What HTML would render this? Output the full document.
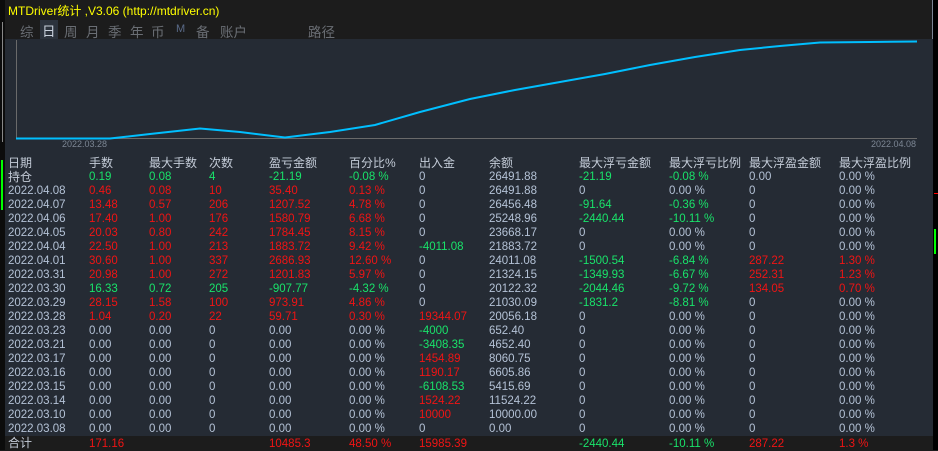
<!DOCTYPE html>
<html><head><meta charset="utf-8"><style>
*{margin:0;padding:0;box-sizing:border-box}
body{width:938px;height:450px;background:#1c1c1c;position:relative;overflow:hidden;font-family:"Liberation Sans","Noto Sans CJK SC",sans-serif;}
.abs{position:absolute}
#title{left:8px;top:2px;color:#ffff00;font-size:12px;white-space:nowrap}
#tabs{left:0;top:20px;height:19px;width:933px}
#tabs span{position:absolute;top:1px;font-size:13.5px;color:#6a6e74}
#panel{left:5px;top:39px;width:928px;height:397px;background:#252b34}
#foot{left:5px;top:436px;width:928px;height:14px;background:#1c1c1c}
.r{position:absolute;left:0;width:933px;height:14px;font-size:11.5px;line-height:14px;color:#b4c2d6;white-space:nowrap}
.r span{position:absolute;top:0}
.h{font-size:12px;color:#c4ccd8}
.c0{left:8px}.c1{left:89px}.c2{left:149px}.c3{left:209px}.c4{left:269px}.c5{left:349px}.c6{left:419px}.c7{left:489px}.c8{left:579px}.c9{left:669px}.c10{left:749px}.c11{left:839px}
.R{color:#f01414}.G{color:#19e36a}
</style></head><body>
<div class="abs" style="left:0;top:0;width:5px;height:450px;background:#0c0c0c"></div>
<div class="abs" style="left:2px;top:22px;width:1px;height:120px;background:#888"></div>
<div class="abs" style="left:1px;top:160px;width:2px;height:50px;background:#0f0"></div>
<div class="abs" style="left:933px;top:0;width:5px;height:450px;background:#000"></div>
<div class="abs" style="left:932px;top:0;width:1px;height:450px;background:#7a8494"></div>
<div class="abs" style="left:934px;top:229px;width:2px;height:25px;background:#0f0"></div>
<div class="abs" style="left:934px;top:193px;width:4px;height:1px;background:#f00"></div>
<div id="title" class="abs">MTDriver统计 ,V3.06 (http://mtdriver.cn)</div>
<div id="tabs" class="abs">
<span style="left:20px">综</span>
<span style="left:40px;top:0;background:#2c333d;color:#c8d0dc;padding:0 2px">日</span>
<span style="left:64px">周</span><span style="left:86px">月</span><span style="left:108px">季</span><span style="left:130px">年</span><span style="left:151px">币</span><span style="left:176px;font-size:11px;top:3px;color:#5a6a88">M</span><span style="left:196px">备</span><span style="left:220px">账户</span><span style="left:308px">路径</span>
</div>
<div id="panel" class="abs"></div>
<div id="foot" class="abs"></div>
<svg class="abs" style="left:0;top:0" width="938" height="160">
<line x1="16.5" y1="40" x2="16.5" y2="139" stroke="#6a6a6a"/>
<line x1="16" y1="138.5" x2="917" y2="138.5" stroke="#6a6a6a"/>
<polyline fill="none" stroke="#00bfff" stroke-width="2" points="16,138.5 110,138.5 150,134 200,128.5 240,132 285,137.5 330,132 375,125 420,112 470,99 515,90 560,82 605,74 650,65 695,57 740,50 780,46 820,42.5 870,42 917,41.5"/>
<text x="62" y="147" font-size="9" fill="#7c8694" font-family="Liberation Sans">2022.03.28</text>
<text x="871" y="147" font-size="9" fill="#7c8694" font-family="Liberation Sans">2022.04.08</text>
</svg>
<div class="r h" style="top:156px"><span class="c0">日期</span><span class="c1">手数</span><span class="c2">最大手数</span><span class="c3">次数</span><span class="c4">盈亏金额</span><span class="c5">百分比%</span><span class="c6">出入金</span><span class="c7">余额</span><span class="c8">最大浮亏金额</span><span class="c9">最大浮亏比例</span><span class="c10">最大浮盈金额</span><span class="c11">最大浮盈比例</span></div>
<div class="r" style="top:170px"><span class="c0 h">持仓</span><span class="c1 G">0.19</span><span class="c2 G">0.08</span><span class="c3 G">4</span><span class="c4 G">-21.19</span><span class="c5 G">-0.08 %</span><span class="c6">0</span><span class="c7">26491.88</span><span class="c8 G">-21.19</span><span class="c9 G">-0.08 %</span><span class="c10">0.00</span><span class="c11">0.00 %</span></div>
<div class="r" style="top:184px"><span class="c0">2022.04.08</span><span class="c1 R">0.46</span><span class="c2 R">0.08</span><span class="c3 R">10</span><span class="c4 R">35.40</span><span class="c5 R">0.13 %</span><span class="c6">0</span><span class="c7">26491.88</span><span class="c8">0</span><span class="c9">0.00 %</span><span class="c10">0</span><span class="c11">0.00 %</span></div>
<div class="r" style="top:198px"><span class="c0">2022.04.07</span><span class="c1 R">13.48</span><span class="c2 R">0.57</span><span class="c3 R">206</span><span class="c4 R">1207.52</span><span class="c5 R">4.78 %</span><span class="c6">0</span><span class="c7">26456.48</span><span class="c8 G">-91.64</span><span class="c9 G">-0.36 %</span><span class="c10">0</span><span class="c11">0.00 %</span></div>
<div class="r" style="top:212px"><span class="c0">2022.04.06</span><span class="c1 R">17.40</span><span class="c2 R">1.00</span><span class="c3 R">176</span><span class="c4 R">1580.79</span><span class="c5 R">6.68 %</span><span class="c6">0</span><span class="c7">25248.96</span><span class="c8 G">-2440.44</span><span class="c9 G">-10.11 %</span><span class="c10">0</span><span class="c11">0.00 %</span></div>
<div class="r" style="top:226px"><span class="c0">2022.04.05</span><span class="c1 R">20.03</span><span class="c2 R">0.80</span><span class="c3 R">242</span><span class="c4 R">1784.45</span><span class="c5 R">8.15 %</span><span class="c6">0</span><span class="c7">23668.17</span><span class="c8">0</span><span class="c9">0.00 %</span><span class="c10">0</span><span class="c11">0.00 %</span></div>
<div class="r" style="top:240px"><span class="c0">2022.04.04</span><span class="c1 R">22.50</span><span class="c2 R">1.00</span><span class="c3 R">213</span><span class="c4 R">1883.72</span><span class="c5 R">9.42 %</span><span class="c6 G">-4011.08</span><span class="c7">21883.72</span><span class="c8">0</span><span class="c9">0.00 %</span><span class="c10">0</span><span class="c11">0.00 %</span></div>
<div class="r" style="top:254px"><span class="c0">2022.04.01</span><span class="c1 R">30.60</span><span class="c2 R">1.00</span><span class="c3 R">337</span><span class="c4 R">2686.93</span><span class="c5 R">12.60 %</span><span class="c6">0</span><span class="c7">24011.08</span><span class="c8 G">-1500.54</span><span class="c9 G">-6.84 %</span><span class="c10 R">287.22</span><span class="c11 R">1.30 %</span></div>
<div class="r" style="top:268px"><span class="c0">2022.03.31</span><span class="c1 R">20.98</span><span class="c2 R">1.00</span><span class="c3 R">272</span><span class="c4 R">1201.83</span><span class="c5 R">5.97 %</span><span class="c6">0</span><span class="c7">21324.15</span><span class="c8 G">-1349.93</span><span class="c9 G">-6.67 %</span><span class="c10 R">252.31</span><span class="c11 R">1.23 %</span></div>
<div class="r" style="top:282px"><span class="c0">2022.03.30</span><span class="c1 G">16.33</span><span class="c2 G">0.72</span><span class="c3 G">205</span><span class="c4 G">-907.77</span><span class="c5 G">-4.32 %</span><span class="c6">0</span><span class="c7">20122.32</span><span class="c8 G">-2044.46</span><span class="c9 G">-9.72 %</span><span class="c10 R">134.05</span><span class="c11 R">0.70 %</span></div>
<div class="r" style="top:296px"><span class="c0">2022.03.29</span><span class="c1 R">28.15</span><span class="c2 R">1.58</span><span class="c3 R">100</span><span class="c4 R">973.91</span><span class="c5 R">4.86 %</span><span class="c6">0</span><span class="c7">21030.09</span><span class="c8 G">-1831.2</span><span class="c9 G">-8.81 %</span><span class="c10">0</span><span class="c11">0.00 %</span></div>
<div class="r" style="top:310px"><span class="c0">2022.03.28</span><span class="c1 R">1.04</span><span class="c2 R">0.20</span><span class="c3 R">22</span><span class="c4 R">59.71</span><span class="c5 R">0.30 %</span><span class="c6 R">19344.07</span><span class="c7">20056.18</span><span class="c8">0</span><span class="c9">0.00 %</span><span class="c10">0</span><span class="c11">0.00 %</span></div>
<div class="r" style="top:324px"><span class="c0">2022.03.23</span><span class="c1">0.00</span><span class="c2">0.00</span><span class="c3">0</span><span class="c4">0.00</span><span class="c5">0.00 %</span><span class="c6 G">-4000</span><span class="c7">652.40</span><span class="c8">0</span><span class="c9">0.00 %</span><span class="c10">0</span><span class="c11">0.00 %</span></div>
<div class="r" style="top:338px"><span class="c0">2022.03.21</span><span class="c1">0.00</span><span class="c2">0.00</span><span class="c3">0</span><span class="c4">0.00</span><span class="c5">0.00 %</span><span class="c6 G">-3408.35</span><span class="c7">4652.40</span><span class="c8">0</span><span class="c9">0.00 %</span><span class="c10">0</span><span class="c11">0.00 %</span></div>
<div class="r" style="top:352px"><span class="c0">2022.03.17</span><span class="c1">0.00</span><span class="c2">0.00</span><span class="c3">0</span><span class="c4">0.00</span><span class="c5">0.00 %</span><span class="c6 R">1454.89</span><span class="c7">8060.75</span><span class="c8">0</span><span class="c9">0.00 %</span><span class="c10">0</span><span class="c11">0.00 %</span></div>
<div class="r" style="top:366px"><span class="c0">2022.03.16</span><span class="c1">0.00</span><span class="c2">0.00</span><span class="c3">0</span><span class="c4">0.00</span><span class="c5">0.00 %</span><span class="c6 R">1190.17</span><span class="c7">6605.86</span><span class="c8">0</span><span class="c9">0.00 %</span><span class="c10">0</span><span class="c11">0.00 %</span></div>
<div class="r" style="top:380px"><span class="c0">2022.03.15</span><span class="c1">0.00</span><span class="c2">0.00</span><span class="c3">0</span><span class="c4">0.00</span><span class="c5">0.00 %</span><span class="c6 G">-6108.53</span><span class="c7">5415.69</span><span class="c8">0</span><span class="c9">0.00 %</span><span class="c10">0</span><span class="c11">0.00 %</span></div>
<div class="r" style="top:394px"><span class="c0">2022.03.14</span><span class="c1">0.00</span><span class="c2">0.00</span><span class="c3">0</span><span class="c4">0.00</span><span class="c5">0.00 %</span><span class="c6 R">1524.22</span><span class="c7">11524.22</span><span class="c8">0</span><span class="c9">0.00 %</span><span class="c10">0</span><span class="c11">0.00 %</span></div>
<div class="r" style="top:408px"><span class="c0">2022.03.10</span><span class="c1">0.00</span><span class="c2">0.00</span><span class="c3">0</span><span class="c4">0.00</span><span class="c5">0.00 %</span><span class="c6 R">10000</span><span class="c7">10000.00</span><span class="c8">0</span><span class="c9">0.00 %</span><span class="c10">0</span><span class="c11">0.00 %</span></div>
<div class="r" style="top:422px"><span class="c0">2022.03.08</span><span class="c1">0.00</span><span class="c2">0.00</span><span class="c3">0</span><span class="c4">0.00</span><span class="c5">0.00 %</span><span class="c6">0</span><span class="c7">0.00</span><span class="c8">0</span><span class="c9">0.00 %</span><span class="c10">0</span><span class="c11">0.00 %</span></div>
<div class="r" style="top:437px"><span class="c0 h" style="top:-1px">合计</span><span class="c1 R">171.16</span><span class="c4 R">10485.3</span><span class="c5 R">48.50 %</span><span class="c6 R">15985.39</span><span class="c8 G">-2440.44</span><span class="c9 G">-10.11 %</span><span class="c10 R">287.22</span><span class="c11 R">1.3 %</span></div>
</body></html>
